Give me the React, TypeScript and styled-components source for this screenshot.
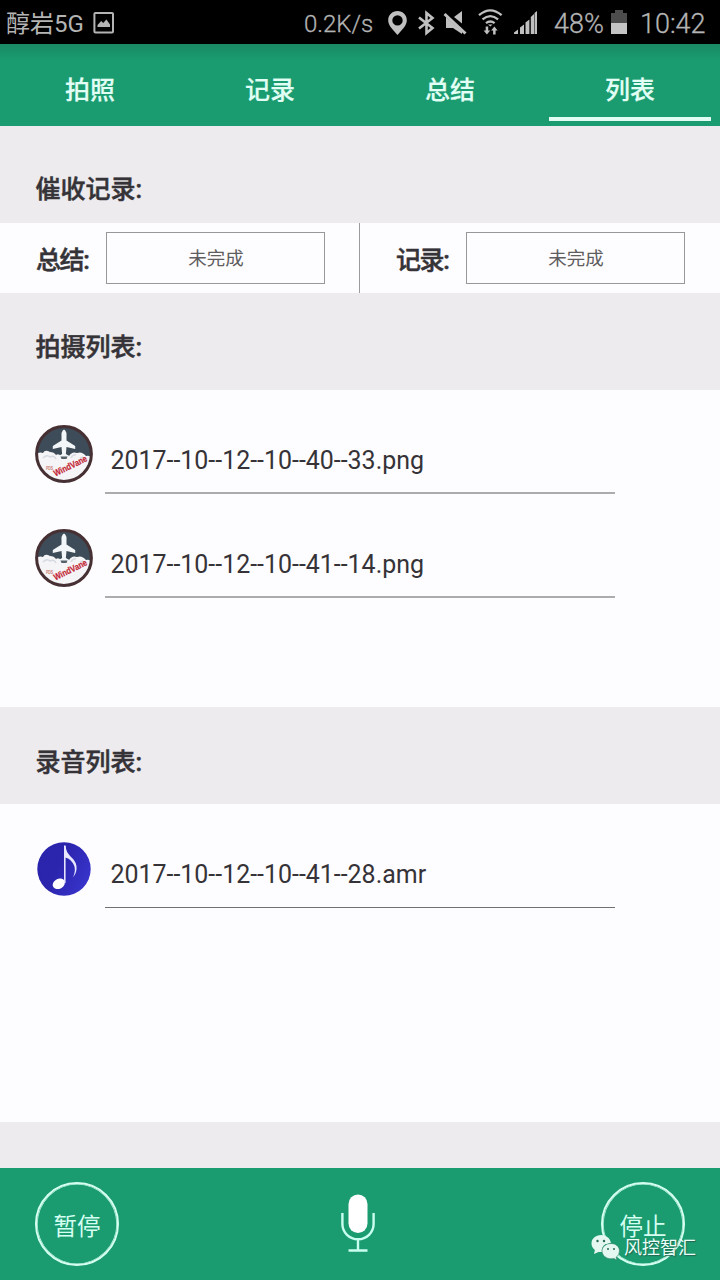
import React from 'react';
import styled, { createGlobalStyle } from 'styled-components';

const Global = createGlobalStyle`
  * { box-sizing: border-box; }
  body {
    margin: 0;
    background: #edebee;
    font-family: Roboto, "Noto Sans CJK SC", sans-serif;
    color: #353337;
  }
`;

const Screen = styled.div`
  display: flex;
  flex-direction: column;
  width: 720px;
  height: 1280px;
  overflow: hidden;
  background: #edebee;
`;

const StatusBar = styled.header`
  display: flex;
  align-items: center;
  height: 44px;
  flex: none;
  padding: 2px 13px 0 6px;
  background: #000;
  color: #b4b4b4;
  white-space: nowrap;
  svg { display: block; flex: none; }
`;

const StatusText = styled.span<{ $size: number; $width: number; $light?: boolean }>`
  flex: none;
  width: ${p => p.$width}px;
  padding-top: 2px;
  font-size: ${p => p.$size}px;
  font-weight: ${p => (p.$light ? 300 : 400)};
  line-height: 40px;
  -webkit-text-stroke: ${p => (p.$light ? '0.3px #b4b4b4' : '0')};
`;

const StatusSpacer = styled.span`flex: 1;`;

const StatusIcons = styled.span`
  display: flex;
  align-items: center;
  width: 174px;
  flex: none;
`;

const Clock = styled(StatusText)`
  margin-left: 12px;
`;

const Tabs = styled.nav`
  display: grid;
  grid-template-columns: repeat(4, 1fr);
  height: 82px;
  flex: none;
  background: linear-gradient(#198a63 0, #1a9b70 16px, #1a9b70 100%);
`;

const Tab = styled.div<{ $active?: boolean }>`
  display: flex;
  align-items: center;
  justify-content: center;
  margin: 0 9px;
  padding-top: 14px;
  border-bottom: 4px solid ${p => (p.$active ? '#e2fbf3' : 'transparent')};
  height: 77px;
  color: #e2fff5;
  font-size: 25px;
  font-weight: 500;
  -webkit-text-stroke: 0.2px #e2fff5;
`;

const SectionTitle = styled.h2<{ $top?: number }>`
  flex: none;
  height: 97px;
  margin: 0;
  padding: ${p => p.$top ?? 37}px 35.5px 0;
  font-size: 25px;
  line-height: 36px;
  font-weight: 500;
  -webkit-text-stroke: 0.5px #353337;
`;

const SummaryRow = styled.section`
  display: grid;
  grid-template-columns: 360px 360px;
  height: 70px;
  flex: none;
  background: #fdfcfe;
`;

const SummaryCell = styled.div<{ $divided?: boolean }>`
  display: flex;
  align-items: center;
  padding: 0 34px 0 36px;
  border-right: ${p => (p.$divided ? '1px solid #9b9a9d' : '0')};
`;

const SummaryLabel = styled.span`
  width: 70px;
  flex: none;
  font-size: 25px;
  letter-spacing: -1.4px;
  font-weight: 500;
  -webkit-text-stroke: 0.5px #353337;
`;

const StatusBox = styled.div`
  display: flex;
  align-items: center;
  justify-content: center;
  width: 219px;
  height: 52px;
  flex: none;
  border: 1px solid #98979a;
  color: #5e5d60;
  font-size: 18.5px;
  line-height: 26px;
  padding: 1px 0 0 1px;
`;

const FileList = styled.section<{ $height: number }>`
  display: flex;
  flex-direction: column;
  height: ${p => p.$height}px;
  flex: none;
  background: #fdfcfe;
`;

const FileRow = styled.div`
  display: flex;
  align-items: flex-end;
  height: 104px;
  padding-left: 34px;
`;

const FileIcon = styled.div<{ $low?: boolean }>`
  width: 71px;
  height: ${p => (p.$low ? 69 : 70)}px;
  flex: none;
  svg { display: block; overflow: visible; }
`;

const FileName = styled.div<{ $dark?: boolean }>`
  width: 510px;
  height: 56px;
  padding: 5px 0 0 5.5px;
  border-bottom: ${p => (p.$dark ? '1px solid #706f73' : '2px solid #acabae')};
  font-size: 24.95px;
  line-height: 35px;
`;

const Footer = styled.footer`
  display: flex;
  align-items: center;
  justify-content: space-between;
  position: relative;
  height: 112px;
  flex: none;
  margin-top: auto;
  padding: 0 35px;
  background: #1a9b70;
`;

const RoundButton = styled.button`
  display: flex;
  align-items: center;
  justify-content: center;
  width: 84px;
  height: 84px;
  padding: 1px 0 0;
  border: 2px solid #d5fff0;
  box-shadow: inset 0 0 0 0.6px #d5fff0;
  border-radius: 50%;
  background: transparent;
  color: #d5fff0;
  font: 23.5px Roboto, "Noto Sans CJK SC", sans-serif;
`;

const MicSlot = styled.div`
  width: 36px;
  height: 60px;
  margin-right: 5px;
  svg { display: block; }
`;

const Watermark = styled.div`
  position: absolute;
  left: 591px;
  top: 64px;
  display: flex;
  align-items: center;
  color: #e9fff8;
  font-size: 18px;
  line-height: 32px;
  text-shadow: 1px 1px 1px #236650;
  white-space: nowrap;
  svg { display: block; margin-right: 4px; }
`;

const PictureIcon = () => (
  <svg width="22" height="24" viewBox="0 0 22 24">
    <rect x="1.400" y="1.900" width="18.600" height="19.600" rx="1" fill="none" stroke="#b4b4b4" strokeWidth="2" />
    <path d="M4.500 16v-2l3.700-4 2 2 3.200-3.500 3.600 5V16z" fill="#b4b4b4" />
  </svg>
);

const SystemIcons = () => (
  <svg width="174" height="36" viewBox="380 5 174 36" fill="#c0c0c0">
    <path fillRule="evenodd" d="M397.500 11c-5.300 0-9.300 4-9.300 9.200 0 6 6 10.500 9.300 14.800 3.300-4.300 9.300-8.800 9.300-14.800 0-5.200-4-9.200-9.300-9.200zm0 4.200a5.200 5.200 0 1 1 0 10.400 5.200 5.200 0 0 1 0-10.400z" />
    <path d="M419 17.500l13.500 10.500-6 5v-20l6 5L419 28.500" fill="none" stroke="#c0c0c0" strokeWidth="2.600" />
    <path d="M454 17l8-6v12.500zM446 17l16 14.500v2.500l-9-6h-7z" />
    <path d="M444.500 14l21 19.500" stroke="#c0c0c0" strokeWidth="3" />
    <g fill="none" stroke="#c0c0c0" strokeWidth="2.300">
      <path d="M479 15.200q11.300-9.700 22.600 0M482.500 19.400q7.800-6.500 15.600 0M486 23.200q4.300-3.500 8.600 0" />
    </g>
    <path d="M488 24.500h4.500l-2.200 2z" />
    <path d="M485.700 26.500h2.500v4h2l-3.300 4-3.300-4h2.100zM493.100 34.500h2.500v-4h2l-3.200-4-3.300 4h2z" />
    <path d="M514 34v-1.500l4-3V34zM520 34v-6.500l4-3V34zM525.500 34V22.500l3.900-3V34zM530.800 34V17l3.200-3v20zM534.500 34V13l2.500-2v23z" />
  </svg>
);

const BatteryIcon = () => (
  <svg width="18" height="28" viewBox="0 0 18 28">
    <path d="M5 1h8v3h4v10H1V4h4z" fill="#4d4d4d" />
    <path d="M1 14h16v11H1z" fill="#c4c4c4" />
  </svg>
);

const PlaneBadge = () => (
  <svg width="60" height="60" viewBox="0 0 60 60">
    <defs>
      <clipPath id="badge"><circle cx="30" cy="30" r="26.800" /></clipPath>
    </defs>
    <circle cx="30" cy="30" r="27.500" fill="#3d4c58" />
    <g clipPath="url(#badge)">
      <path d="M0 32q5-5 9-3 2-4 7-1 4 0 6 3 3-2 6 2 4 1 7-1 3-5 8-3 5-2 9 3 4-1 7 3v26H0z" fill="#f5f4f6" />
      <path d="M9 34q4-4 7-1 4-2 6 2M37 34q2-4 5-3M46 34q3-2 5 1" fill="none" stroke="#d5dae3" strokeWidth="1.500" />
      <path d="M27.500 9q2.500-7 5 0v7.500l8.700 5.500v3l-8.700-2-.6 7 4.300 2.500v1.500h-12.400v-1.500l4.300-2.500-.6-7-8.700 2v-3l8.700-5.500z" fill="#f3f6f8" />
      <path d="M26.500 32.500h7l-1 2.500h-5z" fill="#55616b" />
    </g>
    <circle cx="30" cy="30" r="27.400" fill="none" stroke="#463033" strokeWidth="3" />
    <text x="21.500" y="52.500" transform="rotate(-26 21.500 52.500)" fontFamily="Liberation Sans, sans-serif" fontSize="9" fontWeight="700" fill="#c42838" stroke="#c42838" strokeWidth=".2" textLength="36" lengthAdjust="spacingAndGlyphs">WindVane</text>
    <text x="12" y="46" fontFamily="Liberation Sans, sans-serif" fontSize="4.500" fontWeight="700" fill="#c97972" textLength="7" lengthAdjust="spacingAndGlyphs">PDS</text>
  </svg>
);

const MusicBadge = () => (
  <svg width="60" height="60" viewBox="0 0 60 60">
    <defs>
      <linearGradient id="blue" x1="0" y1="0" x2="1" y2=".5">
        <stop offset="0" stopColor="#2a23ab" />
        <stop offset=".5" stopColor="#2b25ae" />
        <stop offset="1" stopColor="#3732c8" />
      </linearGradient>
    </defs>
    <circle cx="30" cy="30" r="26.700" fill="url(#blue)" />
    <ellipse cx="24.800" cy="44.800" rx="6.400" ry="4.900" transform="rotate(-28 24.800 44.800)" fill="#fff" />
    <path d="M30.800 7v37" stroke="#e5e4fc" strokeWidth="1.600" />
    <path d="M30 6.500h1.600C32 14 36 16.500 39.500 20.500c4.500 5.500 4 12.500-.5 18 2.500-6 2.800-11-1-15.500-2.500-3-4.500-4-7-4.500z" fill="#e9e8ff" />
  </svg>
);

const Mic = () => (
  <svg width="36" height="60" viewBox="0 0 36 60">
    <rect x="8.500" y="0.500" width="19" height="38.500" rx="9.500" fill="#fff" />
    <path d="M2.400 19v11a15.600 15.300 0 0 0 31.200 0V19M18 45.500v11M8.500 56.500h19" fill="none" stroke="#c9fff0" strokeWidth="2.400" />
  </svg>
);

const ChatLogo = () => (
  <svg width="29" height="26" viewBox="0 0 29 26">
    <path d="M10 0C4.500 0 .5 3.600.5 8.500c0 3 1.500 5 3.400 6.500L3 19l4.500-2H11C10.500 11 14 8 19.900 8 19.300 3 15 0 10 0z" fill="#e4f7f0" />
    <path d="M20 8.500c-5 0-9 3.200-9 7.500s4 7.800 9 7.800q1.500 0 2.800-.4l3.200 1.800-.8-3q3.300-2.300 3.300-6.200C28.500 11.700 25 8.500 20 8.500z" fill="#e4f7f0" stroke="#287b60" strokeWidth=".6" />
    <g fill="#286951">
      <circle cx="6.500" cy="6" r="1.200" /><circle cx="13" cy="6" r="1.200" />
      <circle cx="17" cy="14" r="1" /><circle cx="23" cy="14" r="1" />
    </g>
  </svg>
);

const photos = ['2017--10--12--10--40--33.png', '2017--10--12--10--41--14.png'];
const tabs = ['拍照', '记录', '总结', '列表'];

export default function App() {
  return (
    <Screen>
      <Global />
      <StatusBar>
        <StatusText $size={24} $width={87}>醇岩5G</StatusText>
        <PictureIcon />
        <StatusSpacer />
        <StatusText $size={24} $width={76} $light>0.2K/s</StatusText>
        <StatusIcons><SystemIcons /></StatusIcons>
        <StatusText $size={27} $width={56} $light>48%</StatusText>
        <BatteryIcon />
        <Clock $size={27} $width={67} $light>10:42</Clock>
      </StatusBar>
      <Tabs>
        {tabs.map(t => <Tab key={t} $active={t === '列表'}>{t}</Tab>)}
      </Tabs>
      <SectionTitle $top={46}>催收记录:</SectionTitle>
      <SummaryRow>
        <SummaryCell $divided>
          <SummaryLabel>总结:</SummaryLabel>
          <StatusBox>未完成</StatusBox>
        </SummaryCell>
        <SummaryCell>
          <SummaryLabel>记录:</SummaryLabel>
          <StatusBox>未完成</StatusBox>
        </SummaryCell>
      </SummaryRow>
      <SectionTitle>拍摄列表:</SectionTitle>
      <FileList $height={317}>
        {photos.map(name => (
          <FileRow key={name}>
            <FileIcon><PlaneBadge /></FileIcon>
            <FileName>{name}</FileName>
          </FileRow>
        ))}
      </FileList>
      <SectionTitle $top={38}>录音列表:</SectionTitle>
      <FileList $height={318}>
        <FileRow>
          <FileIcon $low><MusicBadge /></FileIcon>
          <FileName $dark>2017--10--12--10--41--28.amr</FileName>
        </FileRow>
      </FileList>
      <Footer>
        <RoundButton>暂停</RoundButton>
        <MicSlot><Mic /></MicSlot>
        <RoundButton>停止</RoundButton>
        <Watermark><ChatLogo />风控智汇</Watermark>
      </Footer>
    </Screen>
  );
}
